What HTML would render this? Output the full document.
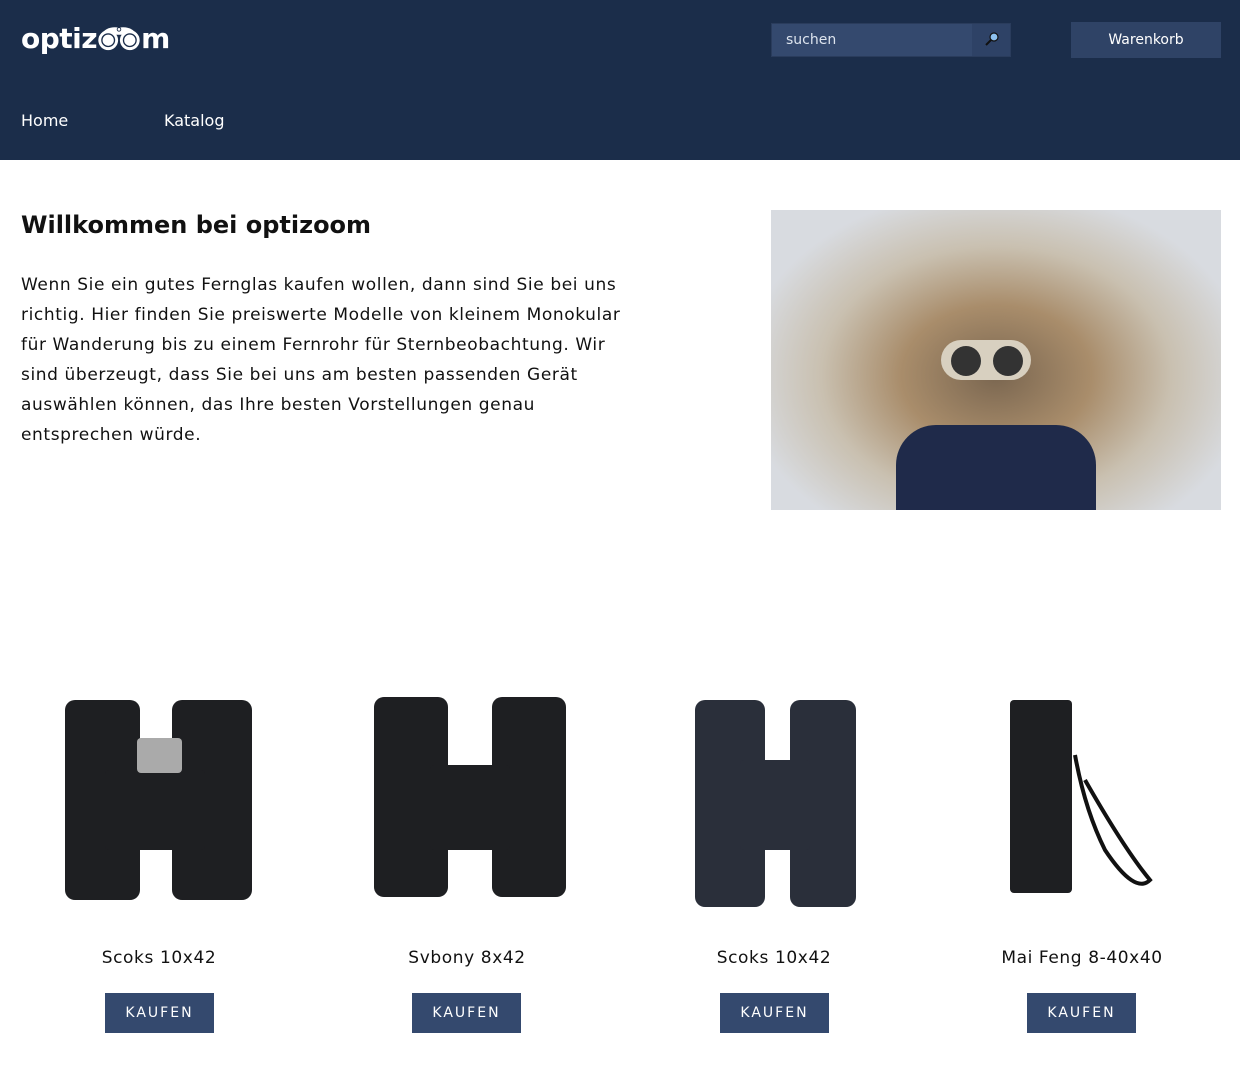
<!DOCTYPE html>
<html><head><meta charset="utf-8"><style>
*{margin:0;padding:0;box-sizing:border-box}
body{width:1240px;height:1080px;background:#fff;font-family:"DejaVu Sans",Verdana,sans-serif;color:#111;position:relative;overflow:hidden}
.hdr{position:absolute;left:0;top:0;width:1240px;height:160px;background:#1b2d4a}
.logo{position:absolute;left:21px;top:22px;color:#fff;font:bold 28px "DejaVu Sans",sans-serif;letter-spacing:-0.5px}
.search{position:absolute;left:771px;top:23px;width:240px;height:34px;background:#34496e;border:1px solid #2a3c5c}
.search span{position:absolute;left:14px;top:8px;color:#dde4ee;font-size:14px}
.search .btn{position:absolute;right:0;top:0;width:38px;height:32px;background:#2e4266}
.cart{position:absolute;left:1071px;top:22px;width:150px;height:36px;background:#2f4366;color:#fff;font-size:14px;text-align:center;line-height:36px}
.nav{position:absolute;top:111px;color:#fff;font-size:16px}
h1{position:absolute;left:21px;top:211px;font-size:24px;font-weight:bold;color:#111}
.txt{position:absolute;left:21px;top:270px;width:620px;font-size:17px;line-height:30px;letter-spacing:0.6px}
.photo{position:absolute;left:771px;top:210px;width:450px;height:300px;background:radial-gradient(ellipse at 50% 55%,#7a6650 0,#a98d6b 30%,#c9c0b0 55%,#d8dbe0 80%);overflow:hidden}
.prod{position:absolute;top:948px;width:200px;text-align:center;font-size:17px;letter-spacing:0.6px}
.buy{position:absolute;top:993px;width:109px;height:40px;background:#34496e;color:#fff;font-size:14px;letter-spacing:2px;text-align:center;line-height:40px}
.b{position:absolute;background:#1e1f22;border-radius:10px}
</style></head><body>
<div class="hdr">
<div class="logo">optiz<svg width="44" height="27" viewBox="0 0 48 30" style="vertical-align:-3px"><path d="M4 12 Q10 2 24 4 Q38 2 44 12" fill="#fff"/><circle cx="12" cy="18" r="11" fill="#fff"/><circle cx="36" cy="18" r="11" fill="#fff"/><circle cx="12" cy="18" r="7" fill="none" stroke="#1b2d4a" stroke-width="1.5"/><circle cx="36" cy="18" r="7" fill="none" stroke="#1b2d4a" stroke-width="1.5"/><circle cx="24" cy="6" r="2" fill="none" stroke="#1b2d4a"/></svg>m</div>
<div class="search"><span>suchen</span><div class="btn"><svg width="38" height="32"><circle cx="22" cy="13" r="4" fill="#8cc0ee" stroke="#111" stroke-width="1.2"/><line x1="19" y1="16" x2="14" y2="21" stroke="#111" stroke-width="2"/></svg></div></div>
<div class="cart">Warenkorb</div>
<div class="nav" style="left:21px">Home</div>
<div class="nav" style="left:164px">Katalog</div>
</div>
<h1>Willkommen bei optizoom</h1>
<div class="txt">Wenn Sie ein gutes Fernglas kaufen wollen, dann sind Sie bei uns richtig. Hier finden Sie preiswerte Modelle von kleinem Monokular für Wanderung bis zu einem Fernrohr für Sternbeobachtung. Wir sind überzeugt, dass Sie bei uns am besten passenden Gerät auswählen können, das Ihre besten Vorstellungen genau entsprechen würde.</div>
<div class="photo">
<div style="position:absolute;left:170px;top:130px;width:90px;height:40px;border-radius:20px;background:#d8d0c0"></div>
<div style="position:absolute;left:180px;top:136px;width:30px;height:30px;border-radius:50%;background:#333"></div>
<div style="position:absolute;left:222px;top:136px;width:30px;height:30px;border-radius:50%;background:#333"></div>
<div style="position:absolute;left:125px;top:215px;width:200px;height:90px;border-radius:40px 40px 0 0;background:#1f2a4a"></div>
</div>
<div class="b" style="left:65px;top:700px;width:75px;height:200px"></div>
<div class="b" style="left:172px;top:700px;width:80px;height:200px"></div>
<div class="b" style="left:105px;top:770px;width:100px;height:80px;border-radius:4px"></div>
<div style="position:absolute;left:137px;top:738px;width:45px;height:35px;background:#aaa;border-radius:4px"></div>
<div class="b" style="left:374px;top:697px;width:74px;height:200px"></div>
<div class="b" style="left:492px;top:697px;width:74px;height:200px"></div>
<div class="b" style="left:430px;top:765px;width:80px;height:85px;border-radius:4px"></div>
<div class="b" style="left:695px;top:700px;width:70px;height:207px;background:#2a2f3a"></div>
<div class="b" style="left:790px;top:700px;width:66px;height:207px;background:#2a2f3a"></div>
<div class="b" style="left:740px;top:760px;width:70px;height:90px;border-radius:4px;background:#2a2f3a"></div>
<div class="b" style="left:1010px;top:700px;width:62px;height:193px;border-radius:4px"></div>
<svg style="position:absolute;left:1065px;top:750px" width="95" height="145"><path d="M10 5 Q20 60 40 100 Q70 145 85 130 Q60 100 20 30" fill="none" stroke="#111" stroke-width="4"/></svg>
<div class="prod" style="left:59px">Scoks 10x42</div>
<div class="prod" style="left:367px">Svbony 8x42</div>
<div class="prod" style="left:674px">Scoks 10x42</div>
<div class="prod" style="left:982px">Mai Feng 8-40x40</div>
<div class="buy" style="left:105px">KAUFEN</div>
<div class="buy" style="left:412px">KAUFEN</div>
<div class="buy" style="left:720px">KAUFEN</div>
<div class="buy" style="left:1027px">KAUFEN</div>
</body></html>
